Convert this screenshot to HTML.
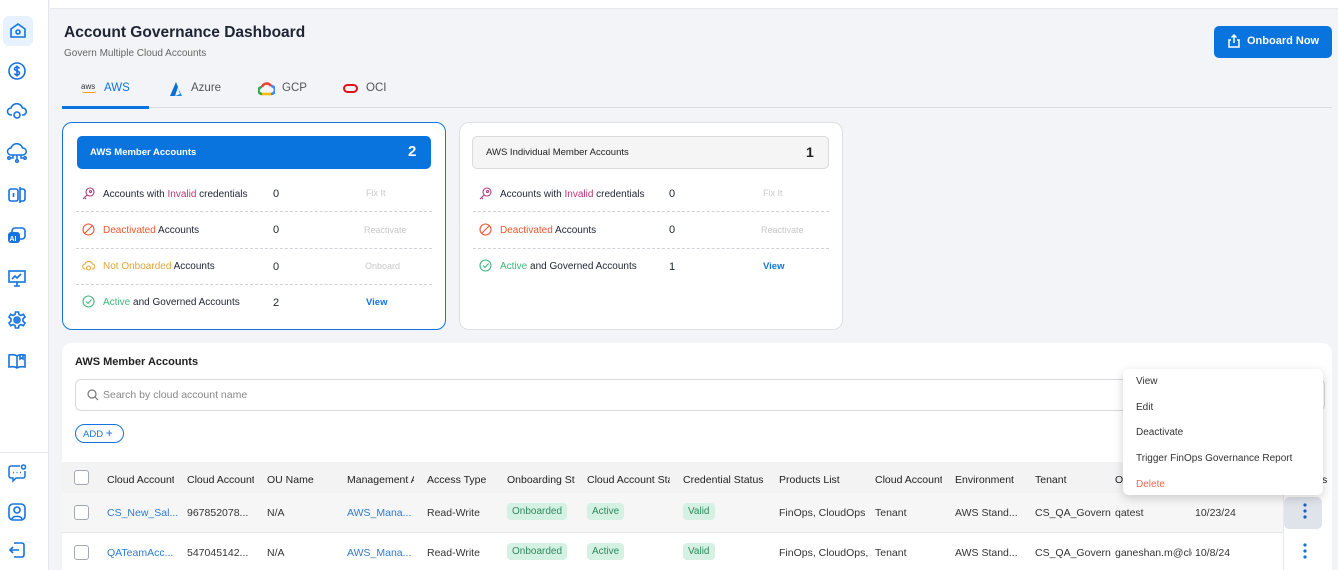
<!DOCTYPE html>
<html style="overflow:hidden;width:1338px;height:570px"><head><meta charset="utf-8"><style>
*{box-sizing:border-box;margin:0;padding:0}
body{width:1338px;height:570px;overflow:hidden;background:#f3f4f8;font-family:"Liberation Sans",sans-serif;color:#1d2433;position:relative}
.a{position:absolute}
.side{left:0;top:0;width:49px;height:570px;background:#fff;border-right:1px solid #e6e7ec}
.t{font-size:10px;white-space:nowrap}
.dash{position:absolute;height:0;border-top:1px dashed #cfd2d8}
.pill{position:absolute;font-size:10px;padding:3px 5px;border-radius:4px;background:#d4f1e4;color:#2e8a5c}
.cb{position:absolute;width:15px;height:15px;border:1px solid #a3a8b2;border-radius:3px;background:#fff}
.th{position:absolute;font-size:10.5px;color:#222;white-space:nowrap;overflow:hidden}
.td{position:absolute;font-size:10.5px;color:#333;white-space:nowrap;overflow:hidden}
.lk{color:#2b7bd0}
</style></head><body>
<div class="a side">
 <div class="a" style="top:16px;left:3px;width:30px;height:30px;background:#e8f2fe;border-radius:6px"></div>
 <svg class="a" style="left:8px;top:21px" width="20" height="20" viewBox="0 0 20 20" fill="none" stroke="#1573e0" stroke-width="1.6"><path d="M10 3L17 8V16H3V8Z"/><circle cx="10" cy="11" r="2"/></svg>
 <svg class="a" style="left:7px;top:61px" width="20" height="20" viewBox="0 0 20 20" fill="none" stroke="#1573e0" stroke-width="1.6"><circle cx="10" cy="10" r="8"/><path d="M12.5 7.5C12 6.5 11 6 10 6 8.5 6 7.5 7 7.5 8 7.5 10 12.5 9.5 12.5 12 12.5 13 11.5 14 10 14 9 14 8 13.5 7.5 12.5M10 4.5V15.5"/></svg>
 <svg class="a" style="left:6px;top:101px" width="22" height="20" viewBox="0 0 22 20" fill="none" stroke="#1573e0" stroke-width="1.6"><path d="M6 14H5A3.5 3.5 0 0 1 5 7 6 6 0 0 1 16.5 7 3.5 3.5 0 0 1 17 14H16"/><circle cx="11" cy="14" r="3"/></svg>
 <svg class="a" style="left:6px;top:143px" width="22" height="22" viewBox="0 0 22 22" fill="none" stroke="#1573e0" stroke-width="1.5"><path d="M5 12A3.5 3.5 0 0 1 5 5 6 6 0 0 1 16.5 5 3.5 3.5 0 0 1 17 12H5"/><path d="M11 12V17M7 12V15H4M15 12V15H18"/><circle cx="11" cy="18" r="1.3"/><circle cx="3" cy="15" r="1.2"/><circle cx="19" cy="15" r="1.2"/></svg>
 <svg class="a" style="left:7px;top:185px" width="20" height="20" viewBox="0 0 20 20" fill="none" stroke="#1573e0" stroke-width="1.6"><rect x="2" y="4" width="9" height="12" rx="2"/><path d="M13 4H16A2 2 0 0 1 18 6V14A2 2 0 0 1 16 16H13M13 2V18M6.5 8V12"/></svg>
 <svg class="a" style="left:7px;top:226px" width="20" height="20" viewBox="0 0 20 20"><rect x="5" y="2" width="13" height="11" rx="3" fill="none" stroke="#1573e0" stroke-width="1.6"/><rect x="1" y="6" width="12" height="11" rx="3" fill="#1573e0"/><text x="2.5" y="15" font-size="7" font-weight="bold" fill="#fff" font-family="Liberation Sans">AI</text></svg>
 <svg class="a" style="left:7px;top:268px" width="20" height="20" viewBox="0 0 20 20" fill="none" stroke="#1573e0" stroke-width="1.6"><rect x="2" y="3" width="16" height="11"/><path d="M5 11L8 8 10 10 14 6M10 14V18M7 18H13"/></svg>
 <svg class="a" style="left:7px;top:310px" width="20" height="20" viewBox="0 0 20 20" fill="none" stroke="#1573e0" stroke-width="1.6"><path d="M8.5 2H11.5L12 4.5 14 5.5 16.3 4.3 18 7 16 8.8V11.2L18 13 16.3 15.7 14 14.5 12 15.5 11.5 18H8.5L8 15.5 6 14.5 3.7 15.7 2 13 4 11.2V8.8L2 7 3.7 4.3 6 5.5 8 4.5Z"/><circle cx="10" cy="10" r="3"/><circle cx="10" cy="10" r="1.2"/></svg>
 <svg class="a" style="left:7px;top:351px" width="20" height="20" viewBox="0 0 20 20" fill="none" stroke="#1573e0" stroke-width="1.6"><path d="M10 5C8 3.5 5 3.5 2 4V16C5 15.5 8 15.5 10 17 12 15.5 15 15.5 18 16V4C15 3.5 12 3.5 10 5ZM10 5V17M13 4V8L14.5 7 16 8V4"/></svg>
 <div class="a" style="left:0;top:452px;width:49px;border-top:1px solid #e6e7ec"></div>
 <svg class="a" style="left:7px;top:463px" width="20" height="20" viewBox="0 0 20 20" fill="none" stroke="#1573e0" stroke-width="1.5"><path d="M13 3H4A2 2 0 0 0 2 5V13A2 2 0 0 0 4 15H6V18L9 15H16A2 2 0 0 0 18 13V8"/><circle cx="16.5" cy="4" r="2"/><path d="M6 9.5H7M9.5 9.5H10.5M13 9.5H14"/></svg>
 <svg class="a" style="left:7px;top:502px" width="20" height="20" viewBox="0 0 20 20" fill="none" stroke="#1573e0" stroke-width="1.6"><rect x="2" y="2" width="16" height="16" rx="4"/><circle cx="10" cy="8" r="3"/><path d="M5 17C6 13.5 14 13.5 15 17"/></svg>
 <svg class="a" style="left:7px;top:540px" width="20" height="20" viewBox="0 0 20 20" fill="none" stroke="#1573e0" stroke-width="1.6"><path d="M8 4V3H15A2 2 0 0 1 17 5V15A2 2 0 0 1 15 17H8V16M12 10H3M6 7L3 10 6 13"/></svg>
</div>
<div class="a" style="left:50px;top:0;width:1288px;height:9px;background:#fff;border-bottom:1px solid #e8e9ee"></div>

<div class="a" style="left:64px;top:24px;font-size:15.5px;font-weight:bold;color:#1d2433">Account Governance Dashboard</div>
<div class="a t" style="left:64px;top:48px;color:#666;font-size:10px">Govern Multiple Cloud Accounts</div>
<div class="a" style="left:1214px;top:26px;width:118px;height:32px;background:#0a74de;border-radius:5px;color:#fff;font-weight:bold;font-size:11px;line-height:30px;padding-left:33px">Onboard Now</div>
<svg class="a" style="left:1227px;top:33px" width="14" height="16" viewBox="0 0 14 16" fill="none" stroke="#fff" stroke-width="1.5"><path d="M4 7H2V14H12V7H10M7 10V2M4.5 4.5L7 2 9.5 4.5"/></svg>

<div class="a" style="left:62px;top:107px;width:1270px;border-top:1px solid #d9dbe0"></div>
<div class="a" style="left:62px;top:106px;width:87px;height:3px;background:#0a74de"></div>
<div class="a" style="left:81px;top:82px;font-size:8px;color:#333">aws</div>
<div class="a" style="left:82px;top:91px;width:14px;height:2px;border-bottom:1.5px solid #f90;border-radius:0 0 6px 6px"></div>
<div class="a" style="left:104px;top:82px;font-size:11.5px;color:#0a74de">AWS</div>
<svg class="a" style="left:169px;top:82px" width="16" height="14" viewBox="0 0 16 14"><path d="M7 0L1 14H6L9 5Z" fill="#0a6fd6"/><path d="M9 6L13 14H6L11 12Z" fill="#1587e6"/></svg>
<div class="a" style="left:191px;top:82px;font-size:11.5px;color:#555">Azure</div>
<svg class="a" style="left:258px;top:82px" width="17" height="14" viewBox="0 0 17 14" fill="none" stroke-width="2.6"><path d="M4 12A3.5 3.5 0 0 1 4 5" stroke="#34a853"/><path d="M4 5A5 5 0 0 1 13 4" stroke="#ea4335"/><path d="M13 4A4 4 0 0 1 13 12" stroke="#4285f4"/><path d="M13 12H4" stroke="#fbbc05"/></svg>
<div class="a" style="left:282px;top:82px;font-size:11.5px;color:#555">GCP</div>
<div class="a" style="left:343px;top:84px;width:15px;height:9px;border:2px solid #e0121b;border-radius:5px"></div>
<div class="a" style="left:366px;top:82px;font-size:11.5px;color:#555">OCI</div>

<div class="a" style="left:62px;top:122px;width:384px;height:208px;background:#fff;border:1px solid #1573e0;border-radius:10px"></div>
<div class="a" style="left:77px;top:136px;width:354px;height:33px;background:#0a74de;border-radius:5px"></div>
<div class="a" style="left:90px;top:147px;color:#fff;font-size:9.5px;font-weight:bold">AWS Member Accounts</div>
<div class="a" style="left:408px;top:143px;color:#fff;font-size:15px;font-weight:bold">2</div>
<div class="a" style="left:459px;top:122px;width:384px;height:208px;background:#fff;border:1px solid #dde0e5;border-radius:10px"></div>
<div class="a" style="left:472px;top:136px;width:357px;height:33px;background:#f5f5f5;border:1px solid #dadada;border-radius:5px"></div>
<div class="a" style="left:486px;top:147px;font-size:9.5px;color:#222">AWS Individual Member Accounts</div>
<div class="a" style="left:806px;top:144px;font-size:14px;font-weight:bold;color:#222">1</div>

<svg class="a" style="left:82px;top:187px" width="13" height="13" viewBox="0 0 13 13" fill="none" stroke="#b03a7a" stroke-width="1.1"><circle cx="8" cy="5" r="4"/><circle cx="8.5" cy="4.5" r="1"/><path d="M5 8L1 12M2.5 10.5L4 12"/></svg>
<div class="a t" style="left:103px;top:189px">Accounts with <span style="color:#c0327a">Invalid</span> credentials</div>
<div class="a t" style="left:273px;top:188px;font-size:11px">0</div>
<div class="a t" style="left:366px;top:188px;color:#c8c8c8;font-size:9px">Fix It</div>
<div class="dash" style="left:76px;top:211px;width:356px"></div>
<svg class="a" style="left:82px;top:223px" width="13" height="13" viewBox="0 0 13 13" fill="none" stroke="#f0562d" stroke-width="1.1"><circle cx="6.5" cy="6.5" r="5.5"/><path d="M2.5 10.5L10.5 2.5"/></svg>
<div class="a t" style="left:103px;top:225px"><span style="color:#f0562d">Deactivated</span> Accounts</div>
<div class="a t" style="left:273px;top:224px;font-size:11px">0</div>
<div class="a t" style="left:364px;top:225px;color:#c8c8c8;font-size:9px">Reactivate</div>
<div class="dash" style="left:76px;top:248px;width:356px"></div>
<svg class="a" style="left:82px;top:259px" width="13" height="13" viewBox="0 0 13 13" fill="none" stroke="#e3a43a" stroke-width="1.1"><path d="M3.5 10A2.5 2.5 0 0 1 3 5 4 4 0 0 1 10.5 5 2.5 2.5 0 0 1 10 10"/><circle cx="6.5" cy="9" r="2"/></svg>
<div class="a t" style="left:103px;top:261px"><span style="color:#e3a43a">Not Onboarded</span> Accounts</div>
<div class="a t" style="left:273px;top:261px;font-size:11px">0</div>
<div class="a t" style="left:365px;top:261px;color:#c8c8c8;font-size:9px">Onboard</div>
<div class="dash" style="left:76px;top:284px;width:356px"></div>
<svg class="a" style="left:82px;top:295px" width="13" height="13" viewBox="0 0 13 13" fill="none" stroke="#3fb87a" stroke-width="1.1"><circle cx="6.5" cy="6.5" r="5.5"/><path d="M4 6.5L6 8.5 9.5 4.5"/></svg>
<div class="a t" style="left:103px;top:297px"><span style="color:#3fb87a">Active</span> and Governed Accounts</div>
<div class="a t" style="left:273px;top:297px;font-size:11px">2</div>
<div class="a t" style="left:366px;top:297px;color:#1573e0;font-weight:bold;font-size:9.5px">View</div>

<svg class="a" style="left:479px;top:187px" width="13" height="13" viewBox="0 0 13 13" fill="none" stroke="#b03a7a" stroke-width="1.1"><circle cx="8" cy="5" r="4"/><circle cx="8.5" cy="4.5" r="1"/><path d="M5 8L1 12M2.5 10.5L4 12"/></svg>
<div class="a t" style="left:500px;top:189px">Accounts with <span style="color:#c0327a">Invalid</span> credentials</div>
<div class="a t" style="left:669px;top:188px;font-size:11px">0</div>
<div class="a t" style="left:763px;top:188px;color:#c8c8c8;font-size:9px">Fix It</div>
<div class="dash" style="left:473px;top:211px;width:356px"></div>
<svg class="a" style="left:479px;top:223px" width="13" height="13" viewBox="0 0 13 13" fill="none" stroke="#f0562d" stroke-width="1.1"><circle cx="6.5" cy="6.5" r="5.5"/><path d="M2.5 10.5L10.5 2.5"/></svg>
<div class="a t" style="left:500px;top:225px"><span style="color:#f0562d">Deactivated</span> Accounts</div>
<div class="a t" style="left:669px;top:224px;font-size:11px">0</div>
<div class="a t" style="left:761px;top:225px;color:#c8c8c8;font-size:9px">Reactivate</div>
<div class="dash" style="left:473px;top:248px;width:356px"></div>
<svg class="a" style="left:479px;top:259px" width="13" height="13" viewBox="0 0 13 13" fill="none" stroke="#3fb87a" stroke-width="1.1"><circle cx="6.5" cy="6.5" r="5.5"/><path d="M4 6.5L6 8.5 9.5 4.5"/></svg>
<div class="a t" style="left:500px;top:261px"><span style="color:#3fb87a">Active</span> and Governed Accounts</div>
<div class="a t" style="left:669px;top:261px;font-size:11px">1</div>
<div class="a t" style="left:763px;top:261px;color:#1573e0;font-weight:bold;font-size:9.5px">View</div>

<div class="a" style="left:62px;top:343px;width:1270px;height:227px;background:#fff;border-radius:10px 10px 0 0;overflow:hidden">
 <div class="a" style="left:13px;top:13px;font-size:11px;font-weight:bold;color:#222">AWS Member Accounts</div>
 <div class="a" style="left:13px;top:36px;width:1250px;height:32px;border:1px solid #d6d9de;border-radius:6px"></div>
 <svg class="a" style="left:25px;top:46px" width="12" height="12" viewBox="0 0 12 12" fill="none" stroke="#777" stroke-width="1.2"><circle cx="5" cy="5" r="4"/><path d="M8 8L11 11"/></svg>
 <div class="a" style="left:41px;top:46px;font-size:10.5px;color:#888">Search by cloud account name</div>
 <div class="a" style="left:13px;top:81px;width:49px;height:19px;border:1px solid #1573e0;border-radius:10px;color:#1573e0;font-size:9.5px;line-height:17px;padding-left:7px">ADD <span style="font-size:12px">+</span></div>
 <div class="a" style="left:0;top:119px;width:1270px;height:31px;background:#f3f3f4"></div>
 <div class="a" style="left:0;top:150px;width:1270px;height:40px;background:#f6f6f7;border-bottom:1px solid #e6e6e6"></div>
 <div class="a" style="left:1221px;top:119px;width:49px;height:110px;background:#fff;border-left:1px solid #e8e8e8"></div>
 <div class="a" style="left:1222px;top:154px;width:38px;height:32px;background:#dfe3ea;border-radius:5px"></div>
</div>
<div class="cb" style="left:74px;top:470px"></div>
<div class="cb" style="left:74px;top:505px"></div>
<div class="cb" style="left:74px;top:545px"></div>
<div class="th" style="left:107px;top:474px;width:67px">Cloud Account Name</div>
<div class="th" style="left:187px;top:474px;width:67px">Cloud Account ID</div>
<div class="th" style="left:267px;top:474px">OU Name</div>
<div class="th" style="left:347px;top:474px;width:67px">Management Account</div>
<div class="th" style="left:427px;top:474px">Access Type</div>
<div class="th" style="left:507px;top:474px;width:68px">Onboarding Status</div>
<div class="th" style="left:587px;top:474px;width:83px">Cloud Account Status</div>
<div class="th" style="left:683px;top:474px">Credential Status</div>
<div class="th" style="left:779px;top:474px">Products List</div>
<div class="th" style="left:875px;top:474px;width:67px">Cloud Account Type</div>
<div class="th" style="left:955px;top:474px">Environment</div>
<div class="th" style="left:1035px;top:474px">Tenant</div>
<div class="th" style="left:1115px;top:474px">O</div>
<div class="th" style="left:1322px;top:474px">s</div>

<div class="td lk" style="left:107px;top:507px">CS_New_Sal...</div>
<div class="td" style="left:187px;top:507px">967852078...</div>
<div class="td" style="left:267px;top:507px">N/A</div>
<div class="td lk" style="left:347px;top:507px">AWS_Mana...</div>
<div class="td" style="left:427px;top:507px">Read-Write</div>
<div class="pill" style="left:507px;top:503px">Onboarded</div>
<div class="pill" style="left:587px;top:503px">Active</div>
<div class="pill" style="left:683px;top:503px">Valid</div>
<div class="td" style="left:779px;top:507px">FinOps, CloudOps</div>
<div class="td" style="left:875px;top:507px">Tenant</div>
<div class="td" style="left:955px;top:507px">AWS Stand...</div>
<div class="td" style="left:1035px;top:507px;width:76px">CS_QA_Governance</div>
<div class="td" style="left:1115px;top:507px">qatest</div>
<div class="td" style="left:1195px;top:507px">10/23/24</div>

<div class="td lk" style="left:107px;top:547px">QATeamAcc...</div>
<div class="td" style="left:187px;top:547px">547045142...</div>
<div class="td" style="left:267px;top:547px">N/A</div>
<div class="td lk" style="left:347px;top:547px">AWS_Mana...</div>
<div class="td" style="left:427px;top:547px">Read-Write</div>
<div class="pill" style="left:507px;top:543px">Onboarded</div>
<div class="pill" style="left:587px;top:543px">Active</div>
<div class="pill" style="left:683px;top:543px">Valid</div>
<div class="td" style="left:779px;top:547px;width:92px">FinOps, CloudOps, AIOps</div>
<div class="td" style="left:875px;top:547px">Tenant</div>
<div class="td" style="left:955px;top:547px">AWS Stand...</div>
<div class="td" style="left:1035px;top:547px;width:76px">CS_QA_Governance</div>
<div class="td" style="left:1115px;top:547px;width:77px">ganeshan.m@cloud</div>
<div class="td" style="left:1195px;top:547px">10/8/24</div>

<svg class="a" style="left:1303px;top:503px" width="4" height="16"><circle cx="2" cy="2" r="1.6" fill="#1f5fbf"/><circle cx="2" cy="8" r="1.6" fill="#1f5fbf"/><circle cx="2" cy="14" r="1.6" fill="#1f5fbf"/></svg>
<svg class="a" style="left:1303px;top:543px" width="4" height="16"><circle cx="2" cy="2" r="1.6" fill="#1573e0"/><circle cx="2" cy="8" r="1.6" fill="#1573e0"/><circle cx="2" cy="14" r="1.6" fill="#1573e0"/></svg>

<div class="a" style="left:1123px;top:369px;width:200px;height:126px;background:#fff;border-radius:6px;box-shadow:0 3px 10px rgba(0,0,0,0.18)"></div>
<div class="a t" style="left:1136px;top:376px;color:#333">View</div>
<div class="a t" style="left:1136px;top:402px;color:#333">Edit</div>
<div class="a t" style="left:1136px;top:427px;color:#333">Deactivate</div>
<div class="a t" style="left:1136px;top:453px;color:#333">Trigger FinOps Governance Report</div>
<div class="a t" style="left:1136px;top:479px;color:#ec6a4e">Delete</div>
</body></html>
